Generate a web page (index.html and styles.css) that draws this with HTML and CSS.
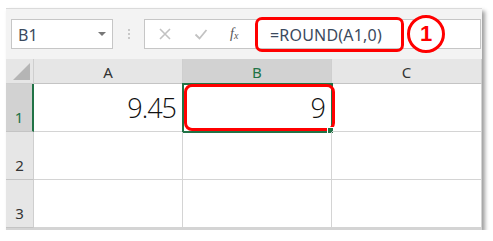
FILE: index.html
```html
<!DOCTYPE html>
<html>
<head>
<meta charset="utf-8">
<link rel="stylesheet" href="styles.css">
</head>
<body>
<div class="window">
  <div class="toolbar">
    <div class="namebox">
      <span class="name">B1</span>
      <span class="caret"></span>
    </div>
    <div class="dots"><i></i><i></i><i></i></div>
    <div class="fbar">
      <div class="fbtns">
        <svg class="ico" width="14" height="14" viewBox="0 0 14 14"><path d="M2 2 L12 12 M12 2 L2 12" stroke="#c2c2c2" stroke-width="1.6" fill="none"/></svg>
        <svg class="ico" width="14" height="14" viewBox="0 0 14 14"><path d="M1.5 7.5 L5.5 11.5 L12.5 3" stroke="#c2c2c2" stroke-width="1.8" fill="none"/></svg>
        <span class="fx">f<sub>x</sub></span>
      </div>
      <div class="formula">=ROUND(A1,0)</div>
      <div class="hl-formula"></div>
      <div class="badge">1</div>
    </div>
  </div>
  <div class="grid">
    <div class="corner"><span class="tri"></span></div>
    <div class="ch">A</div>
    <div class="ch sel">B</div>
    <div class="ch last">C</div>

    <div class="rh sel">1</div>
    <div class="cell num">9.45</div>
    <div class="cell num active">9<span class="hl-cell"></span><span class="handle"></span></div>
    <div class="cell last"></div>

    <div class="rh">2</div>
    <div class="cell"></div>
    <div class="cell"></div>
    <div class="cell last"></div>

    <div class="rh">3</div>
    <div class="cell"></div>
    <div class="cell"></div>
    <div class="cell last"></div>
  </div>
</div>
</body>
</html>
```
FILE: styles.css
```css
html, body { margin: 0; padding: 0; background: #fff; }
body { font-family: "Noto Sans", "Open Sans", sans-serif; }

.window {
  margin: 8px 0 0 6px;
  width: 476px;
  background: #f3f3f3;
  border-top: 1px solid #dadada;
  box-shadow: 3px 3px 4px rgba(0,0,0,0.38);
}

.toolbar {
  display: flex;
  align-items: center;
  padding: 10px 0 10px 5px;
  height: 30px;
}

.namebox {
  height: 28px;
  background: #fff;
  border: 1px solid #c6c6c6;
  display: flex;
  align-items: center;
  justify-content: space-between;
  padding: 0 0 0 6px;
  box-sizing: content-box;
  width: 94px;
}
.name { font-size: 16px; color: #3b4a5e; margin-top: 2px; }
.caret {
  width: 0; height: 0;
  border-left: 4px solid transparent;
  border-right: 4px solid transparent;
  border-top: 4px solid #777;
  margin-right: 6px;
}

.dots {
  width: 31px;
  display: flex;
  flex-direction: column;
  align-items: center;
  gap: 2px;
}
.dots i { display: block; width: 2px; height: 2px; background: #c8c8c8; }

.fbar {
  position: relative;
  flex: 1;
  height: 28px;
  background: #fff;
  border: 1px solid #c6c6c6;
  margin-right: 1px;
  display: flex;
  align-items: center;
}
.fbtns {
  display: flex;
  align-items: center;
  gap: 22px;
  padding-left: 13px;
  width: 97px;
}
.fx { font-family: "Liberation Serif", serif; font-style: italic; font-size: 14px; color: #555; }
.fx sub { font-size: 10px; vertical-align: -1px; }

.formula {
  margin-left: 15px;
  font-size: 16px;
  color: #3b4a5e;
  letter-spacing: 0.2px;
  margin-top: 1px;
}

.hl-formula {
  position: absolute;
  left: 110px;
  top: -3px;
  width: 143px;
  height: 29px;
  border: 3px solid #ff0000;
  border-radius: 7px;
}
.badge {
  position: absolute;
  left: 262px;
  top: -5px;
  width: 32px;
  height: 32px;
  border: 3px solid #ff0000;
  border-radius: 50%;
  background: #fff;
  color: #ff0000;
  font-family: "Liberation Sans", Arial, sans-serif;
  font-weight: bold;
  font-size: 22px;
  display: flex;
  align-items: center;
  justify-content: center;
}

.grid {
  display: grid;
  grid-template-columns: 28px 149px 149px 150px;
  grid-template-rows: 25px 48px 48px 48px;
  background: #fff;
  border-bottom: 2px solid #d4d4d4;
}

.corner {
  background: #e6e6e6;
  border-right: 1px solid #cfcfcf;
  border-bottom: 1px solid #cfcfcf;
  position: relative;
}
.tri {
  position: absolute;
  right: 3px;
  bottom: 3px;
  width: 0; height: 0;
  border-left: 17px solid transparent;
  border-bottom: 17px solid #b5b5b5;
}

.ch {
  background: #e6e6e6;
  border-right: 1px solid #cfcfcf;
  border-bottom: 1px solid #c4c4c4;
  display: flex;
  align-items: center;
  justify-content: center;
  font-size: 15px;
  color: #333;
  padding-top: 1px;
}
.ch.sel { background: #d2d2d2; color: #217346; }

.rh {
  background: #e6e6e6;
  border-bottom: 1px solid #c4c4c4;
  border-right: 1px solid #cfcfcf;
  display: flex;
  align-items: flex-end;
  justify-content: center;
  font-size: 15px;
  color: #333;
  padding-bottom: 4px;
  box-sizing: border-box;
}
.rh.sel { background: #d2d2d2; color: #217346; border-right: 2px solid #217346; }

.cell {
  border-right: 1px solid #d4d4d4;
  border-bottom: 1px solid #d4d4d4;
  position: relative;
}
.num {
  display: flex;
  align-items: flex-end;
  justify-content: flex-end;
  font-family: "Open Sans", "Noto Sans", sans-serif;
  font-weight: 300;
  font-size: 27px;
  letter-spacing: -1px;
  line-height: 1;
  color: #111;
  padding: 0 6px 10px 0;
  box-sizing: border-box;
}
.active { outline: 2px solid #217346; outline-offset: -1px; }
.hl-cell {
  position: absolute;
  left: 1px;
  top: 0;
  right: -4px;
  bottom: 0;
  border: 3px solid #ff0000;
  border-radius: 8px;
}
.handle {
  position: absolute;
  right: -3px;
  bottom: -3px;
  width: 5px;
  height: 5px;
  background: #217346;
  border: 1px solid #fff;
}
```
